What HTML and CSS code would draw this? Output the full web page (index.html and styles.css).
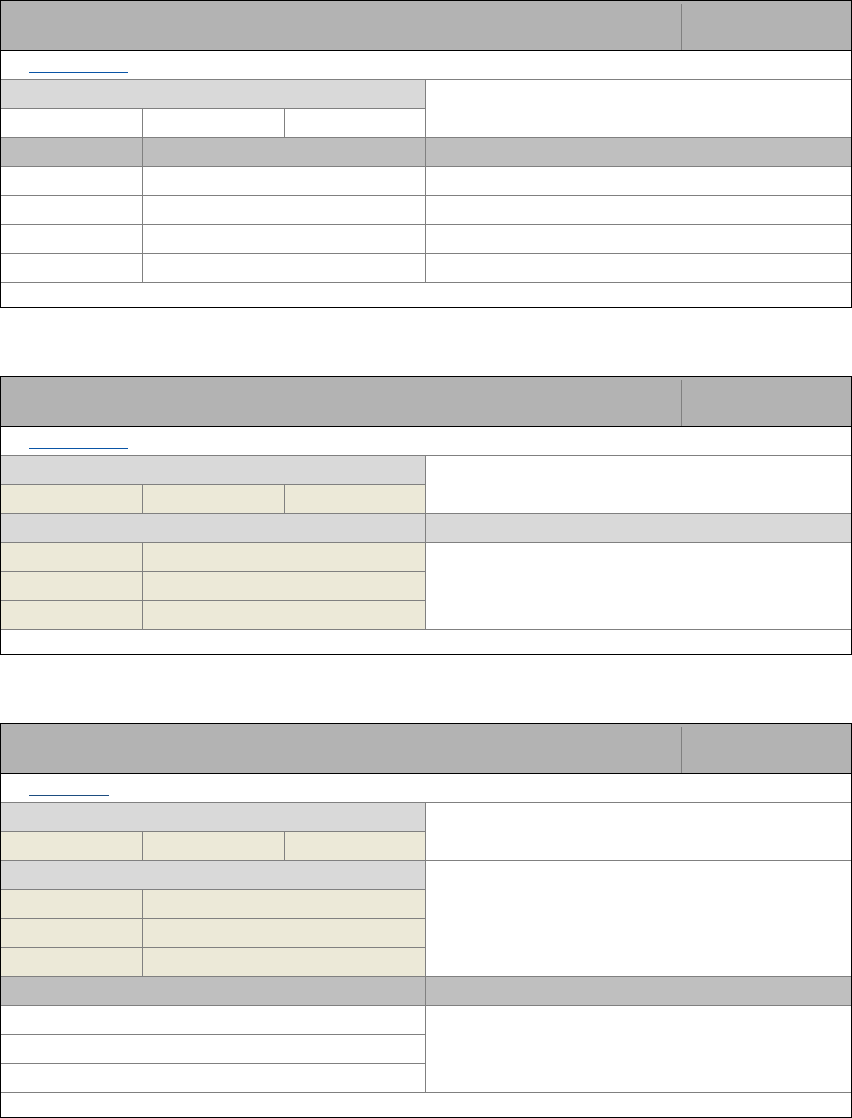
FILE: index.html
```html
<!DOCTYPE html>
<html lang="en">
<head>
<meta charset="utf-8">
<title>Panels</title>
<link rel="stylesheet" href="styles.css">
</head>
<body>
  <section class="panel">
    <div class="head"><div class="head-main"></div><div class="head-side"></div></div>
    <div class="linkrow"><a class="lnk" href="#"></a></div>
    <div class="grid">
      <div class="lg s3"></div><div class="c r2"></div>
      <div class="c"></div><div class="c"></div><div class="c"></div>
      <div class="mg"></div><div class="mg s2"></div><div class="mg"></div>
      <div class="c"></div><div class="c s2"></div><div class="c"></div>
      <div class="c"></div><div class="c s2"></div><div class="c"></div>
      <div class="c"></div><div class="c s2"></div><div class="c"></div>
      <div class="c"></div><div class="c s2"></div><div class="c"></div>
    </div>
    <div class="foot"></div>
  </section>

  <section class="panel">
    <div class="head"><div class="head-main"></div><div class="head-side"></div></div>
    <div class="linkrow"><a class="lnk" href="#"></a></div>
    <div class="grid">
      <div class="lg s3"></div><div class="c r2"></div>
      <div class="bg"></div><div class="bg"></div><div class="bg"></div>
      <div class="lg s3"></div><div class="lg"></div>
      <div class="bg"></div><div class="bg s2"></div><div class="c r3"></div>
      <div class="bg"></div><div class="bg s2"></div>
      <div class="bg"></div><div class="bg s2"></div>
    </div>
    <div class="foot"></div>
  </section>

  <section class="panel">
    <div class="head"><div class="head-main"></div><div class="head-side"></div></div>
    <div class="linkrow"><a class="lnk short visited" href="#"></a></div>
    <div class="grid">
      <div class="lg s3"></div><div class="c r2"></div>
      <div class="bg"></div><div class="bg"></div><div class="bg"></div>
      <div class="lg s3"></div><div class="c r4"></div>
      <div class="bg"></div><div class="bg s2"></div>
      <div class="bg"></div><div class="bg s2"></div>
      <div class="bg"></div><div class="bg s2"></div>
      <div class="mg s3"></div><div class="mg"></div>
      <div class="c s3"></div><div class="c r3"></div>
      <div class="c s3"></div>
      <div class="c s3"></div>
    </div>
    <div class="foot"></div>
  </section>
</body>
</html>
```

FILE: styles.css
```css
html, body {
  margin: 0;
  padding: 0;
  background: #fff;
  font-family: "Liberation Sans", Arial, sans-serif;
  font-size: 13px;
}

.panel {
  width: 850px;
  border: 1px solid #000;
  margin: 0 0 68px 0;
  background: #fff;
}

.panel:last-child {
  margin-bottom: 0;
}

.head {
  height: 49px;
  background: #b3b3b3;
  border-bottom: 1px solid #000;
  display: flex;
}

.head-main {
  flex: 1;
}

.head-side {
  width: 169px;
  margin-top: 3px;
  border-left: 1px solid #808080;
}

.linkrow {
  height: 29px;
  box-sizing: border-box;
  border-bottom: 1px solid #808080;
  padding-left: 28px;
}

.lnk {
  display: inline-block;
  width: 99px;
  height: 21px;
  border-bottom: 1px solid #0a55a6;
}

.lnk.short {
  width: 80px;
}

.lnk.visited {
  border-bottom-color: #1d4d80;
}

.grid {
  display: grid;
  grid-template-columns: 141px 141px 140px 425px;
  grid-auto-rows: 28px;
  gap: 1px;
  background: #808080;
}

.foot {
  height: 24px;
  border-top: 1px solid #808080;
}

.c  { background: #fff; }
.lg { background: #d9d9d9; }
.mg { background: #bfbfbf; }
.bg { background: #ece9d8; }

.s2 { grid-column: span 2; }
.s3 { grid-column: span 3; }
.r2 { grid-row: span 2; }
.r3 { grid-row: span 3; }
.r4 { grid-row: span 4; }
```
